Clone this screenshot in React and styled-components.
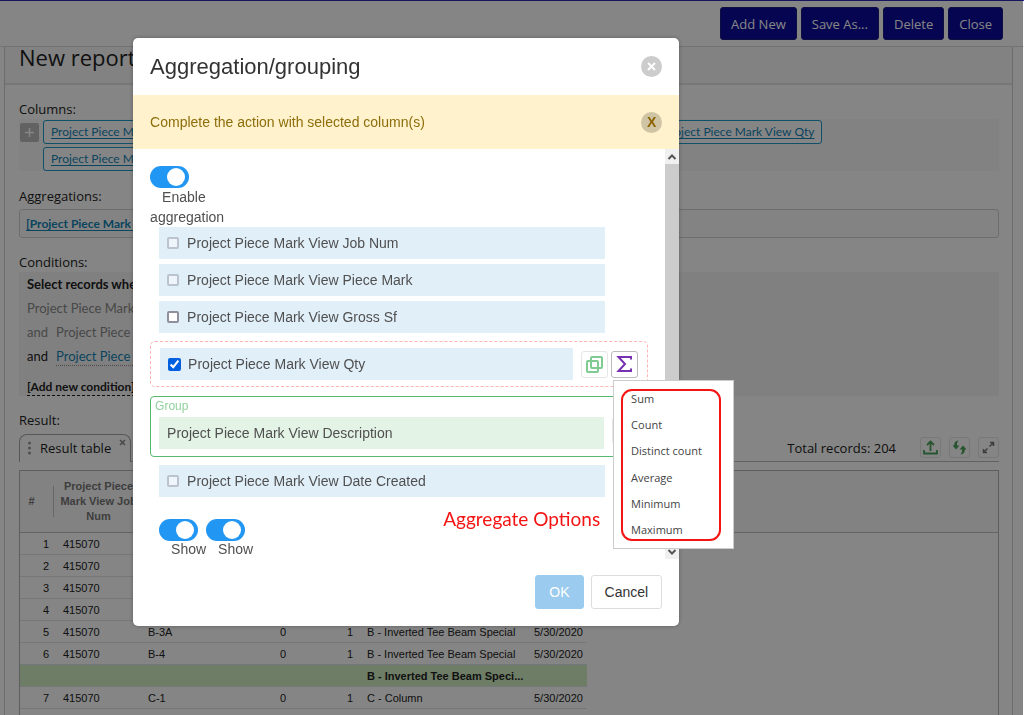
import React from "react";
import styled, { createGlobalStyle } from "styled-components";

const GlobalStyle = createGlobalStyle`
  * {
    box-sizing: border-box;
  }

  body {
    margin: 0;
    background: #fff;
    color: #222;
    font-family: "Open Sans", "Noto Sans", sans-serif;
    font-size: 13px;
    overflow: hidden;
  }

  button,
  input {
    font: inherit;
  }
`;

const Page = styled.div`
  height: 100vh;
  overflow: hidden;
  display: flex;
  flex-direction: column;
  border-top: 1px solid #2b2bb4;
`;

const Toolbar = styled.header`
  display: flex;
  justify-content: flex-end;
  gap: 4px;
  padding: 6px 21px;
  border-bottom: 1px solid #dcdcdc;
`;

const ToolButton = styled.button`
  height: 33px;
  padding: 0 10px;
  border: 1px solid #1c1c80;
  border-radius: 3px;
  background: #0a0a9c;
  color: #fff;
  font-size: 13px;
`;

const Panel = styled.main`
  flex: 1;
  margin: 0 11px 0 4px;
  border: solid #d0d0d0;
  border-width: 0 1px;
`;

const PanelTitle = styled.h1`
  height: 38px;
  margin: 0;
  padding-left: 14px;
  border-bottom: 2px solid #e4e4e4;
  background: #f9f9f9;
  font-size: 22px;
  font-weight: 400;
  line-height: 20px;
`;

const Content = styled.div`
  padding: 14px 13px 0 14px;
`;

const Label = styled.h2`
  height: 20px;
  margin: 0;
  font-size: 13px;
  font-weight: 400;
  line-height: 20px;
`;

const ColumnsBox = styled.div`
  display: flex;
  gap: 4px;
  height: 52px;
  padding: 1px 0 0 1px;
  margin-bottom: 15px;
  background: #f9f9f9;
`;

const AddButton = styled.button`
  display: flex;
  align-items: center;
  justify-content: center;
  width: 19px;
  height: 19px;
  margin-top: 3px;
  padding: 0;
  border: 0;
  border-radius: 2px;
  background: #bdbdbd;
`;

const ChipList = styled.div`
  display: flex;
  flex-wrap: wrap;
  align-content: flex-start;
  gap: 3px 7px;
  max-width: 800px;
`;

const Chip = styled.a`
  height: 24px;
  padding: 0 7px;
  border: 1px solid #1b9cc8;
  border-radius: 3px;
  background: #fff;
  color: #1384b5;
  font-family: Lato, sans-serif;
  font-size: 12px;
  line-height: 22px;
  text-underline-offset: 2px;
`;

const AggregationBox = styled.div`
  height: 29px;
  margin: 3px 0 14px;
  padding-left: 6px;
  border: 1px solid #d2d2d2;
  border-radius: 3px;
  background: #fbfbfb;
  color: #1384b5;
  line-height: 27px;

  a {
    color: inherit;
    font-family: Lato, sans-serif;
    font-size: 12px;
    font-weight: 700;
    text-underline-offset: 2px;
  }
`;

const Conditions = styled.div`
  height: 124px;
  margin-bottom: 14px;
  padding-left: 8px;
  background: #f6f6f6;
  font-family: Lato, sans-serif;
  white-space: nowrap;
`;

const Condition = styled.div`
  display: flex;
  gap: 8px;
  height: 24px;
  line-height: 24px;
  color: ${(p) => (p.$muted ? "#8a8a8a" : "#222")};

  a {
    color: #1384b5;
    text-decoration: underline dotted #999;
    text-underline-offset: 4px;
  }
`;

const AddCondition = styled.a`
  display: inline-block;
  margin-top: 11px;
  color: #222;
  font-size: 12px;
  font-weight: 700;
  line-height: 16px;
  text-decoration: none;
  border-bottom: 1px dashed #222;
`;

const TabBar = styled.div`
  display: flex;
  align-items: center;
  height: 28px;
  margin: 4px 0 8px;
  border-bottom: 1px solid #bcbcbc;
`;

const Tab = styled.div`
  display: flex;
  align-items: center;
  gap: 8px;
  height: 28px;
  padding: 0 4px 0 7px;
  border: 1px solid #a8a8a8;
  border-bottom: 0;
  border-radius: 8px 8px 0 0;
  background: #fff;
  white-space: nowrap;
`;

const TabClose = styled.button`
  display: flex;
  align-self: flex-start;
  margin-top: 4px;
  padding: 0;
  border: 0;
  background: none;
`;

const Total = styled.span`
  margin-left: auto;
  padding-right: 24px;
`;

const IconButton = styled.button`
  display: flex;
  align-items: center;
  justify-content: center;
  width: 21px;
  height: 21px;
  padding: 0;
  margin-left: 8px;
  border: 1px solid #e6e6e6;
  border-radius: 3px;
  background: none;

  &:first-of-type {
    margin-left: 0;
  }
`;

const TableFrame = styled.div`
  border: 1px solid #b4b4b4;
  min-height: 300px;
  font-family: "Liberation Sans", Arial, sans-serif;
  font-size: 11px;
`;

const Table = styled.table`
  width: 100%;
  border-spacing: 0;
  table-layout: fixed;
`;

const HeadCell = styled.th`
  height: 62px;
  padding: 0;
  border-bottom: 1px solid #c0c0c8;
  background: #fafafa;
  color: #777;
  line-height: 15px;

  div {
    max-height: 45px;
    margin-right: ${(p) => (p.$index ? "2px" : "0")};
    padding: ${(p) => (p.$index ? "8px 10px 8px 0" : "0 2px")};
    border-right: ${(p) => (p.$index ? "1px solid #c4c4c4" : "0")};
    overflow: hidden;
  }
`;

const Cell = styled.td`
  height: 22px;
  padding: 0 7px;
  border-bottom: 1px solid #dfe6ea;
  background: ${(p) => (p.$group ? "#d3f0c4" : "none")};
  font-weight: ${(p) => (p.$group ? 700 : 400)};
  text-align: ${(p) => (p.$right ? "right" : "left")};
  white-space: nowrap;
`;

const Overlay = styled.div`
  position: fixed;
  inset: 0 1px 0 0;
  padding: 38px 16px 0 13%;
  background: rgba(0, 0, 0, 0.48);
  color: #505050;
  font-family: "Liberation Sans", Arial, sans-serif;
  font-size: 14px;
`;

const Dialog = styled.section`
  max-width: 546px;
  border-radius: 5px;
  background: #fff;
  box-shadow: 0 0 4px rgba(0, 0, 0, 0.3);
`;

const DialogHeader = styled.header`
  display: flex;
  align-items: center;
  justify-content: space-between;
  height: 57px;
  padding: 0 17px;

  h2 {
    margin: 0;
    color: #333;
    font-size: 22px;
    font-weight: 400;
  }
`;

const Notice = styled.div`
  display: flex;
  align-items: center;
  justify-content: space-between;
  height: 54px;
  padding: 0 17px;
  background: #fff2cd;
  color: #8d6e0a;
`;

const RoundButton = styled.button`
  display: flex;
  align-items: center;
  justify-content: center;
  width: 21px;
  height: 21px;
  padding: 0;
  border: 0;
  border-radius: 50%;
  background: ${(p) => (p.$warn ? "#cfc4a3" : "#ccc")};
  color: #8d6200;
  font-weight: 700;
`;

const DialogBody = styled.div`
  display: flex;
`;

const Fields = styled.div`
  flex: 1;
  min-width: 0;
  padding: 17px 17px 0;
`;

const Scrollbar = styled.div`
  display: flex;
  flex-direction: column;
  justify-content: space-between;
  width: 14px;
  background: #ccc;
`;

const ScrollButton = styled.button`
  display: flex;
  align-items: center;
  justify-content: center;
  height: 15px;
  padding: 0;
  border: 0;
  background: #f0f0f0;
`;

const Toggle = styled.label`
  display: block;
  width: ${(p) => (p.$wide ? "80px" : "47px")};
  line-height: 20px;

  span {
    display: block;
    text-indent: 12px;
    margin-top: ${(p) => (p.$wide ? "-1px" : "-2px")};
  }
`;

const Switch = styled.input`
  appearance: none;
  display: block;
  width: 39px;
  height: 22px;
  margin: 0;
  padding: 2px;
  border-radius: 11px;
  background: #2196f3;

  &::before {
    content: "";
    display: block;
    width: 18px;
    height: 18px;
    margin-left: 15px;
    border-radius: 50%;
    background: #fff;
  }
`;

const FieldList = styled.div`
  display: grid;
  gap: 5px;
  margin: 0 43px 0 9px;
`;

const Field = styled.label`
  display: flex;
  align-items: center;
  flex: 1;
  gap: 7px;
  height: 32px;
  padding: 0 8px;
  background: ${(p) => (p.$group ? "#e3f3e5" : "#e1eff9")};
`;

const CheckBox = styled.input`
  width: 13px;
  height: 13px;
  margin: 0;
  accent-color: #0060df;

  &:not(:checked) {
    appearance: none;
    width: 12px;
    height: 12px;
    margin-right: 1px;
    border: 2px solid #8f8f9d;
    border-radius: 2px;
    background: #fff;
  }

  &:disabled {
    opacity: 0.45;
  }
`;

const SelectedField = styled.div`
  display: flex;
  align-items: center;
  height: 46px;
  margin: 8px 0 9px;
  padding: 0 9px;
  border: 1px dashed #ffb3b3;
  border-radius: 5px;
`;

const GroupBox = styled.div`
  height: 61px;
  margin-bottom: 8px;
  padding: 0 8px;
  border: 1px solid #56b971;
  border-radius: 4px;

  h3 {
    height: 20px;
    margin: 0 -4px;
    color: #90d29d;
    font-size: 12px;
    font-weight: 400;
    line-height: 18px;
  }

  div {
    display: flex;
  }
`;

const ActionButton = styled.button`
  display: flex;
  align-items: center;
  justify-content: center;
  width: 27px;
  height: 27px;
  margin-left: ${(p) => (p.$first ? "8px" : "3px")};
  padding: 0;
  border: 1px solid ${(p) => (p.$active ? "#bbb" : "#e6e6e6")};
  border-radius: 3px;
  background: #fff;
`;

const MenuAnchor = styled.div`
  position: relative;
`;

const Menu = styled.div`
  position: absolute;
  top: 29px;
  left: 5px;
  z-index: 2;
  width: 121px;
  padding: 8px 7px 7px;
  border: 1px solid #ccc;
  background: #fff;
`;

const MenuFrame = styled.div`
  display: flex;
  flex-direction: column;
  justify-content: space-between;
  width: 100px;
  height: 152px;
  border: 2px solid #f51414;
  border-radius: 11px;
`;

const MenuItem = styled.button`
  padding: 0 0 0 8px;
  border: 0;
  background: none;
  color: #444;
  font-family: "Open Sans", "Noto Sans", sans-serif;
  font-size: 11px;
  line-height: 16px;
  text-align: left;
  white-space: nowrap;
`;

const Bottom = styled.div`
  display: flex;
  margin: 22px 0 0 9px;
`;

const Note = styled.p`
  margin: -13px 48px 0 auto;
  color: #f51414;
  font-family: Lato, sans-serif;
  font-size: 19px;
  line-height: 26px;
`;

const DialogFooter = styled.footer`
  display: flex;
  justify-content: flex-end;
  gap: 7px;
  padding: 16px 17px 17px;
`;

const FooterButton = styled.button`
  height: 34px;
  padding: 0 13px;
  border: 1px solid ${(p) => (p.$primary ? "#9bcbee" : "#ddd")};
  border-radius: 3px;
  background: ${(p) => (p.$primary ? "#9bcbee" : "#fff")};
  color: ${(p) => (p.$primary ? "#fff" : "#333")};
`;

const rows = [
  [1, "415070", "B-1", 0, 1, "B - Inverted Tee Beam", "5/30/2020"],
  [2, "415070", "B-2", 0, 1, "B - Inverted Tee Beam", "5/30/2020"],
  [3, "415070", "B-2A", 0, 1, "B - Inverted Tee Beam", "5/30/2020"],
  [4, "415070", "B-3", 0, 1, "B - Inverted Tee Beam", "5/30/2020"],
  [5, "415070", "B-3A", 0, 1, "B - Inverted Tee Beam Special", "5/30/2020"],
  [6, "415070", "B-4", 0, 1, "B - Inverted Tee Beam Special", "5/30/2020"],
  ["", "", "", "", "", "B - Inverted Tee Beam Speci...", ""],
  [7, "415070", "C-1", 0, 1, "C - Column", "5/30/2020"],
];

const columns = ["Job Num", "Piece Mark", "Gross Sf", "Qty", "Description", "Date Created"];
const aggregates = ["Sum", "Count", "Distinct count", "Average", "Minimum", "Maximum"];

function Chevron({ up }) {
  return (
    <svg width="10" height="8" viewBox="0 0 10 8" fill="none" stroke="#555" strokeWidth="2">
      <path d={up ? "M1.5 6 5 2.5 8.5 6" : "M1.5 2 5 5.5 8.5 2"} />
    </svg>
  );
}

function Report() {
  return (
    <Page>
      <Toolbar>
        <ToolButton>Add New</ToolButton>
        <ToolButton>Save As...</ToolButton>
        <ToolButton>Delete</ToolButton>
        <ToolButton>Close</ToolButton>
      </Toolbar>
      <Panel>
        <PanelTitle>New report</PanelTitle>
        <Content>
          <Label>Columns:</Label>
          <ColumnsBox>
            <AddButton aria-label="Add column">
              <svg width="11" height="11" viewBox="0 0 11 11" stroke="#fff" strokeWidth="1.5">
                <path d="M5.5 1v9M1 5.5h9" />
              </svg>
            </AddButton>
            <ChipList>
              {columns.slice(0, 5).map((name) => (
                <Chip key={name} href="#">
                  Project Piece Mark View {name}
                </Chip>
              ))}
            </ChipList>
          </ColumnsBox>
          <Label>Aggregations:</Label>
          <AggregationBox>
            <a href="#">[Project Piece Mark View Description]</a>
          </AggregationBox>
          <Label>Conditions:</Label>
          <Conditions>
            <Condition>
              <strong>Select records where all of the following apply</strong>
            </Condition>
            <Condition $muted>Project Piece Mark View Job Num</Condition>
            <Condition $muted>
              <span>and</span> <span>Project Piece Mark View Qty</span>
            </Condition>
            <Condition>
              <span>and</span> <a href="#">Project Piece Mark View Qty</a>
            </Condition>
            <AddCondition href="#">[Add new condition]</AddCondition>
          </Conditions>
          <Label>Result:</Label>
          <TabBar>
            <Tab>
              <svg width="5" height="14" viewBox="0 0 5 14" fill="#999">
                <circle cx="2.5" cy="2" r="1.5" />
                <circle cx="2.5" cy="7" r="1.5" />
                <circle cx="2.5" cy="12" r="1.5" />
              </svg>
              Result table
              <TabClose aria-label="Close tab">
                <svg width="7" height="7" viewBox="0 0 7 7" stroke="#888" strokeWidth="1.5">
                  <path d="M1 1l5 5M6 1L1 6" />
                </svg>
              </TabClose>
            </Tab>
            <Total>Total records: 204</Total>
            <IconButton aria-label="Export">
              <svg width="15" height="15" viewBox="0 0 15 15" fill="none" stroke="#4aa35a" strokeWidth="1.8">
                <path d="M7.5 11V2M4 5l3.500-3.500L11 5M1 10v3.500h13V10" />
              </svg>
            </IconButton>
            <IconButton aria-label="Refresh">
              <svg width="15" height="15" viewBox="0 0 15 15" fill="#4aa35a">
                <path d="M6.500 .5C3.500.8 2 2.500 2.200 5.500H.5L4 9.500l3.500-4H5C4.800 3.500 5.200 2 6.500.5z" />
                <path d="M8.500 14.500c3-.3 4.500-2 4.300-5h1.700L11 5.500l-3.500 4H10c.2 2-.2 3.500-1.500 5z" />
              </svg>
            </IconButton>
            <IconButton aria-label="Full screen">
              <svg width="13" height="13" viewBox="0 0 13 13" fill="none" stroke="#777" strokeWidth="1.5">
                <path d="M8 1.500h3.500V5M11.500 1.500l-4 4M5 11.500H1.500V8M1.500 11.500l4-4" />
              </svg>
            </IconButton>
          </TabBar>
          <TableFrame>
            <Table>
              <colgroup>
                <col style={{ width: 36 }} />
                <col style={{ width: 85 }} />
                <col style={{ width: 86 }} />
                <col style={{ width: 66 }} />
                <col style={{ width: 67 }} />
                <col style={{ width: 167 }} />
                <col style={{ width: 60 }} />
                <col />
              </colgroup>
              <thead>
                <tr>
                  <HeadCell $index>
                    <div>#</div>
                  </HeadCell>
                  {columns.map((name) => (
                    <HeadCell key={name}>
                      <div>Project Piece Mark View {name}</div>
                    </HeadCell>
                  ))}
                  <HeadCell aria-hidden="true" />
                </tr>
              </thead>
              <tbody>
                {rows.map((row, i) => (
                  <tr key={i}>
                    {row.map((value, j) => (
                      <Cell key={j} $group={row[0] === ""} $right={j === 0 || j === 3 || j === 4}>
                        {value}
                      </Cell>
                    ))}
                  </tr>
                ))}
              </tbody>
            </Table>
          </TableFrame>
        </Content>
      </Panel>
    </Page>
  );
}

function CheckField({ name, ...rest }) {
  return (
    <Field>
      <CheckBox type="checkbox" {...rest} />
      Project Piece Mark View {name}
    </Field>
  );
}

function AggregateMenu() {
  return (
    <Menu>
      <MenuFrame>
        {aggregates.map((name) => (
          <MenuItem key={name}>{name}</MenuItem>
        ))}
      </MenuFrame>
    </Menu>
  );
}

function App() {
  return (
    <>
      <GlobalStyle />
      <Report />
      <Overlay>
        <Dialog role="dialog" aria-label="Aggregation/grouping">
          <DialogHeader>
            <h2>Aggregation/grouping</h2>
            <RoundButton aria-label="Close">
              <svg width="9" height="9" viewBox="0 0 9 9" stroke="#fff" strokeWidth="2">
                <path d="M1 1l7 7M8 1L1 8" />
              </svg>
            </RoundButton>
          </DialogHeader>
          <Notice>
            Complete the action with selected column(s)
            <RoundButton $warn>X</RoundButton>
          </Notice>
          <DialogBody>
            <Fields>
              <Toggle $wide>
                <Switch type="checkbox" defaultChecked />
                <span>Enable aggregation</span>
              </Toggle>
              <FieldList>
                <CheckField name="Job Num" disabled />
                <CheckField name="Piece Mark" disabled />
                <CheckField name="Gross Sf" />
              </FieldList>
              <SelectedField>
                <CheckField name="Qty" defaultChecked />
                <ActionButton $first aria-label="Group">
                  <svg width="17" height="17" viewBox="0 0 17 17" fill="none" stroke="#7fcb92" strokeWidth="2">
                    <rect x="5" y="1" width="11" height="11" rx="1" />
                    <rect x="1" y="5" width="11" height="11" rx="1" />
                  </svg>
                </ActionButton>
                <MenuAnchor>
                  <ActionButton $active aria-label="Aggregate">
                    <svg width="17" height="18" viewBox="0 0 17 18" fill="none" stroke="#7632b0" strokeWidth="2">
                      <path d="M15 4.500V2H2.500l6.500 7-6.500 7H15v-2.500" />
                    </svg>
                  </ActionButton>
                  <AggregateMenu />
                </MenuAnchor>
              </SelectedField>
              <GroupBox>
                <h3>Group</h3>
                <div>
                  <Field as="span" $group>
                    Project Piece Mark View Description
                  </Field>
                  <ActionButton $first aria-label="Ungroup" />
                </div>
              </GroupBox>
              <FieldList>
                <CheckField name="Date Created" disabled />
              </FieldList>
              <Bottom>
                <Toggle>
                  <Switch type="checkbox" defaultChecked />
                  <span>Show</span>
                </Toggle>
                <Toggle>
                  <Switch type="checkbox" defaultChecked />
                  <span>Show</span>
                </Toggle>
                <Note>Aggregate Options</Note>
              </Bottom>
            </Fields>
            <Scrollbar>
              <ScrollButton aria-label="Scroll up">
                <Chevron up />
              </ScrollButton>
              <ScrollButton aria-label="Scroll down">
                <Chevron />
              </ScrollButton>
            </Scrollbar>
          </DialogBody>
          <DialogFooter>
            <FooterButton $primary>OK</FooterButton>
            <FooterButton>Cancel</FooterButton>
          </DialogFooter>
        </Dialog>
      </Overlay>
    </>
  );
}

export default App;
